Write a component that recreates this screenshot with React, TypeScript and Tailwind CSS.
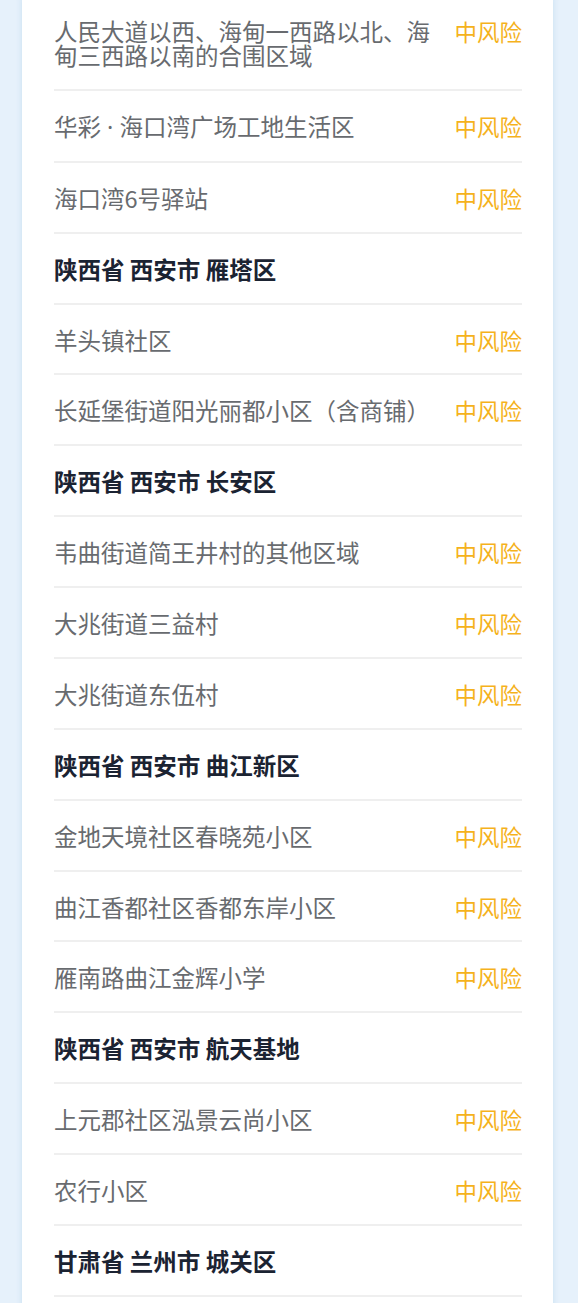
import React from "react";

type Row = { t: React.ReactNode; h?: boolean };

const rows: Row[] = [
  { t: "人民大道以西、海甸一西路以北、海甸三西路以南的合围区域" },
  {
    t: (
      <>
        华彩
        <span style={{ fontFamily: '"Noto Sans", sans-serif' }}> · </span>
        海口湾广场工地生活区
      </>
    ),
  },
  { t: "海口湾6号驿站" },
  { t: "陕西省 西安市 雁塔区", h: true },
  { t: "羊头镇社区" },
  { t: "长延堡街道阳光丽都小区（含商铺）" },
  { t: "陕西省 西安市 长安区", h: true },
  { t: "韦曲街道简王井村的其他区域" },
  { t: "大兆街道三益村" },
  { t: "大兆街道东伍村" },
  { t: "陕西省 西安市 曲江新区", h: true },
  { t: "金地天境社区春晓苑小区" },
  { t: "曲江香都社区香都东岸小区" },
  { t: "雁南路曲江金辉小学" },
  { t: "陕西省 西安市 航天基地", h: true },
  { t: "上元郡社区泓景云尚小区" },
  { t: "农行小区" },
  { t: "甘肃省 兰州市 城关区", h: true },
];

export default function App() {
  return (
    <div
      className="h-[1303px] overflow-hidden bg-[#e6f1fb]"
      style={{ fontFamily: '"Noto Sans CJK SC", "Noto Sans", sans-serif' }}
    >
      <div className="ml-[22px] mr-[25px] -mt-[4px] bg-white pl-[32px] pr-[31px] pb-[40px] shadow-[0_0_6px_rgba(150,190,225,0.35)]">
        {rows.map((r, i) => (
          <div key={i}>
            <div className="flex items-start pt-[23px] pb-[21.88px] text-[23.5px] leading-[24px]">
              {r.h ? (
                <div className="flex-1 font-bold text-[#1b2332]">{r.t}</div>
              ) : (
                <>
                  <div className="flex-1 pr-[14px] text-[#686b6f]">{r.t}</div>
                  <div className="shrink-0 text-[22.5px] text-[#f5b21c]">中风险</div>
                </>
              )}
            </div>
            <div className="h-[2px] bg-[#efefef]" />
          </div>
        ))}
      </div>
    </div>
  );
}
